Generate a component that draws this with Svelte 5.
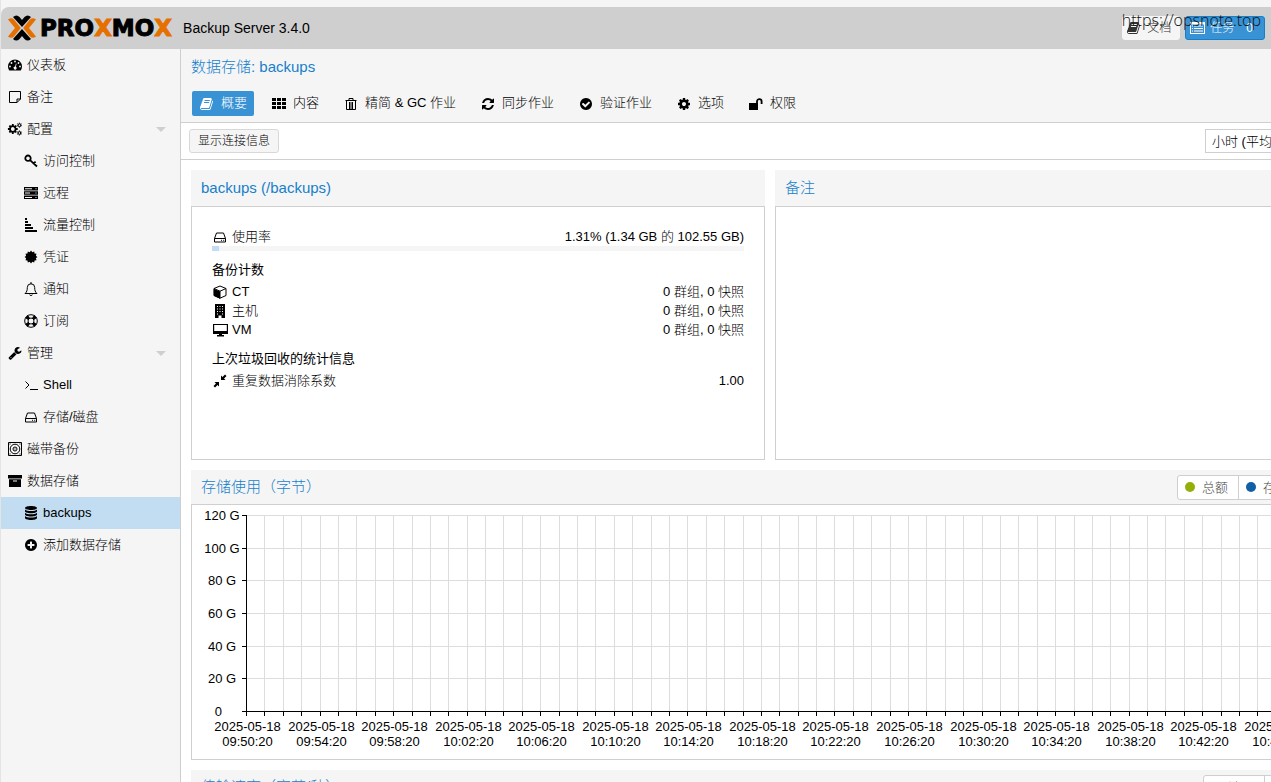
<script>
  // Shapes are drawn on a 14px box; `box: 1792` marks the ones on the font grid.
  const dot = (x, y, r) => `M${x - r} ${y}a${r} ${r} 0 1 0 ${r * 2} 0a${r} ${r} 0 1 0 ${-r * 2} 0z`
  const at = (cx, cy, r, a) => `${(cx + r * Math.cos(a)).toFixed(2)} ${(cy + r * Math.sin(a)).toFixed(2)}`

  function star(cx, cy, inner, outer, points) {
    const list = []
    for (let i = 0; i < points * 2; i++) {
      list.push(at(cx, cy, i % 2 ? inner : outer, (i * Math.PI) / points))
    }
    return `M${list.join('L')}z`
  }

  function teeth(cx, cy, inner, outer) {
    let d = ''
    for (let i = 0; i < 8; i++) {
      const a = (i * Math.PI) / 4
      d += `M${at(cx, cy, inner, a)}L${at(cx, cy, outer, a)}`
    }
    return d
  }

  const disc = 'm252 162q0 209-103 385.5t-279.5 279.5-385.5 103-385.5-103-279.5-279.5-103-385.5 103-385.5 279.5-279.5 385.5-103 385.5 103 279.5 279.5 103 385.5z'

  const icons = {
    dashboard: {
      fill:
        'M7 1.5a7 7 0 0 0-7 7c0 1.4.4 2.7 1.1 3.8.1.2.3.2.5.2h10.8c.2 0 .3 0 .5-.2A7 7 0 0 0 14 8.5a7 7 0 0 0-7-7z' +
        dot(2, 8.5, 0.9) + dot(3.5, 5, 0.9) + dot(7, 3.5, 0.9) + dot(10.5, 5, 0.9) + dot(12, 8.5, 0.9) +
        'M7.9 5.500l.7.2-.7 3a1.500 1.500 0 1 1-.8-.2z',
    },
    note: { line: 'M1.5 1.5h11v7.500l-3.500 3.500h-7.500zM12.500 9H9v3.500', },
    cogs: {
      line: dot(11.4, 3.2, 1.3) + teeth(11.4, 3.2, 1.5, 2.5) + dot(11.4, 11, 1.3) + teeth(11.4, 11, 1.5, 2.5),
      heavy: dot(4.8, 7, 2.8) + teeth(4.8, 7, 3, 4.9),
    },
    key: { heavy: dot(4, 4.2, 2.7) + 'M6 6.200L13 12.500M9.800 9.400l1.800-1.700' },
    server: {
      fill: 'M0 1h14v3.500H0zM0 5.300h14v3.500H0zM0 9.600h14v3.500H0zM1 2.300h7v1H1zM1 6.600h5v1H1zM1 10.900h7v1H1zM11.500 2.300h1v1h-1zM11.500 6.600h1v1h-1zM11.500 10.900h1v1h-1z',
    },
    amount: { fill: 'M1 0h2v2H1zM1 3h3v2H1zM1 6h6v2H1zM1 9h8v2H1zM1 12h12v2H1z' },
    certificate: { fill: star(7, 7, 5, 6.4, 12) },
    bell: { line: 'M1 11.500c1.900-1.600 2.300-3.200 2.300-6a3.700 3.700 0 0 1 7.400 0c0 2.800.4 4.400 2.300 6zM5.700 12.500c.3 1.500 2.300 1.500 2.600 0M7 0v2' },
    ring: { line: dot(7, 7, 6.3) + dot(7, 7, 3), heavy: 'M3.200 1.600l2 3M1.600 3.200l3 2M10.800 1.600l-2 3M12.400 3.200l-3 2M3.200 12.400l2-3M1.600 10.800l3-2M10.800 12.400l-2-3M12.400 10.800l-3-2' },
    wrench: {
      box: 1792,
      fill: 'M448 1472q0-26-19-45t-45-19-45 19-19 45 19 45 45 19 45-19 19-45zm644-420l-682 682q-37 37-90 37-52 0-91-37l-106-108q-38-36-38-90 0-53 38-91l681-681q39 98 114.500 173.500t173.500 114.500zm634-435q0 39-23 106-47 134-164.500 217.500t-258.500 83.500q-185 0-316.500-131.500t-131.500-316.500 131.500-316.500 316.500-131.500q58 0 121.500 16.500t107.500 46.500q16 11 16 28t-16 28l-293 169v224l193 107q5-3 79-48.500t135.500-81 70.500-35.500q15 0 23.500 10t8.500 25z',
    },
    terminal: { line: 'M1.500 3.500l3.500 3.500-3.500 3.500M6 11.500h8' },
    hdd: { line: 'M1.500 8.500l2-5.500h7l2 5.500v3.500h-11zM1.500 8.500h11M8 10.300h1M10.200 10.300h1' },
    tape: { line: 'M.5.5h13v13H.5z' + dot(7, 7, 4.8) + dot(7, 7, 2) + 'M6.500 7h1M1.500 2h1M11.500 2h1M1.500 12h1M11.500 12h1' },
    archive: { fill: 'M0 1h14v3.500H0zM1 5.300h12V13H1zM5 6.500h4v1H5z' },
    database: {
      fill: 'M7 0c3.300 0 6 .9 6 2s-2.700 2-6 2-6-.9-6-2 2.700-2 6-2zM1 3.500c1 1 3.500 1.500 6 1.500s5-.5 6-1.500v1.700c0 1.100-2.700 2-6 2s-6-.9-6-2zM1 6.700c1 1 3.500 1.500 6 1.500s5-.5 6-1.500v1.800c0 1.100-2.700 2-6 2s-6-.9-6-2zM1 10c1 1 3.500 1.500 6 1.500s5-.5 6-1.500v2c0 1.100-2.700 2-6 2s-6-.9-6-2z',
    },
    plus: {
      box: 1792,
      fill: 'M1344 960v-128q0-26-19-45t-45-19h-256v-256q0-26-19-45t-45-19h-128q-26 0-45 19t-19 45v256h-256q-26 0-45 19t-19 45v128q0 26 19 45t45 19h256v256q0 26 19 45t45 19h128q26 0 45-19t19-45v-256h256q26 0 45-19t19-45zm320-64' + disc.slice(8),
    },
    book: {
      box: 1792,
      fill: 'M1639 478q40 57 18 129l-275 906q-19 64-76.500 107.500t-122.500 43.500h-923q-77 0-148.500-53.500t-99.500-131.500q-24-67-2-127 0-4 3-27t4-37q1-8-3-21.500t-3-19.500q2-11 8-21t16.500-23.500 16.500-23.500q23-38 45-91.500t30-91.500q3-10 .5-30t-.5-28q3-11 17-28t17-23q21-36 42-92t25-90q1-9-2.500-32t.5-28q4-13 22-30.500t22-22.500q19-26 42.500-84.500t27.500-96.500q1-8-3-25.500t-2-26.500q2-8 9-18t18-23 17-21q8-12 16.500-30.500t15-35 16-36 19.500-32 26.500-23.500 36-11.500 47.500 5.500l-1 3q38-9 51-9h761q74 0 114 56t18 130l-274 906q-36 119-71.500 153.500t-128.500 34.500h-869q-27 0-38 15-11 16-1 43 24 70 144 70h923q29 0 56-15.500t35-41.500l300-987q7-22 5-57 38 15 59 43zm-1064 2q-4 13 2 22.500t20 9.500h608q13 0 25.500-9.500t16.500-22.500l21-64q4-13-2-22.500t-20-9.500h-608q-13 0-25.500 9.500t-16.500 22.500zm-83 256q-4 13 2 22.500t20 9.500h608q13 0 25.500-9.500t16.500-22.500l21-64q4-13-2-22.500t-20-9.500h-608q-13 0-25.500 9.500t-16.500 22.500z',
    },
    grid: { fill: 'M0 1h4v3H0zM5 1h4v3H5zM10 1h4v3h-4zM0 5h4v3H0zM5 5h4v3H5zM10 5h4v3h-4zM0 9h4v3H0zM5 9h4v3H5zM10 9h4v3h-4z' },
    trash: { line: 'M1.500 3.500h11M5 3V1.500h4V3M2.500 4v8.500h9V4M5.500 5v7M7 5v7M8.500 5v7' },
    refresh: {
      box: 1792,
      fill: 'M1639 1056q0 5-1 7-64 268-268 434.500t-478 166.500q-146 0-282.500-55t-243.500-157l-129 129q-19 19-45 19t-45-19-19-45v-448q0-26 19-45t45-19h448q26 0 45 19t19 45-19 45l-137 137q71 66 161 102t187 36q134 0 250-65t186-179q11-17 53-117 8-23 30-23h192q13 0 22.500 9.500t9.500 22.500zm25-800v448q0 26-19 45t-45 19h-448q-26 0-45-19t-19-45 19-45l138-138q-148-137-349-137-134 0-250 65t-186 179q-11 17-53 117-8 23-30 23h-199q-13 0-22.500-9.500t-9.500-22.500v-7q65-268 270-434.500t480-166.500q146 0 284 55.500t245 156.500l130-129q19-19 45-19t45 19 19 45z',
    },
    check: {
      box: 1792,
      fill: 'M1412 734q0-28-18-46l-91-90q-19-19-45-19t-45 19l-408 407-226-226q-19-19-45-19t-45 19l-91 90q-18 18-18 46 0 27 18 45l362 362q19 19 45 19 27 0 46-19l543-543q18-18 18-45z' + disc,
    },
    cog: {
      box: 1792,
      fill: 'M1152 896q0-106-75-181t-181-75-181 75-75 181 75 181 181 75 181-75 75-181zm512-109v222q0 12-8 23t-20 13l-185 28q-19 54-39 91 35 50 107 138 10 12 10 25t-9 23q-27 37-99 108t-94 71q-12 0-26-9l-138-108q-44 23-91 38-16 136-29 186-7 28-36 28h-222q-14 0-24.500-8.500t-11.500-21.500l-28-184q-49-16-90-37l-141 107q-10 9-25 9-14 0-25-11-126-114-165-168-7-10-7-23 0-12 8-23 15-21 51-66.500t54-70.500q-27-50-41-99l-183-27q-13-2-21-12.500t-8-23.500v-222q0-12 8-23t19-13l186-28q14-46 39-92-40-57-107-138-10-12-10-24 0-10 9-23 26-36 98.500-107.500t94.500-71.500q13 0 26 10l138 107q44-23 91-38 16-136 29-186 7-28 36-28h222q14 0 24.500 8.500t11.500 21.500l28 184q49 16 90 37l142-107q9-9 24-9 13 0 25 10 129 119 165 170 7 8 7 22 0 12-8 23-15 21-51 66.500t-54 70.500q26 50 41 98l183 28q13 2 21 12.500t8 23.500z',
    },
    unlock: { fill: 'M0 6h9v7H0z', heavy: 'M8 6V4.500a2.300 2.300 0 0 1 4.600 0V7' },
    cube: { fill: 'M.8 3.800L7 6.500V13.700L.8 10.800z', line: 'M7 1l6 2.500v7L7 13.200 1 10.500v-7zM1 3.500l6 2.700 6-2.700M7 6.200v7' },
    building: { fill: 'M2 0h10v14H8.500v-2.500h-3V14H2zM4 2h1v1H4zM6.500 2h1v1h-1zM9 2h1v1H9zM4 4.500h1v1H4zM6.500 4.500h1v1h-1zM9 4.500h1v1H9zM4 7h1v1H4zM6.500 7h1v1h-1zM9 7h1v1H9zM4 9.500h1v1H4zM9 9.500h1v1H9z' },
    desktop: { fill: 'M0 1h15v10H9v1h2v1.500H4V12h2v-1H0zM1.200 2v6h12.600V2z' },
    compress: { fill: 'M8 1.500l1.500 1.500L12 .5 13.500 2 11 4.500 12.500 6H8zM1.500 8H6v4.500L4.500 11 2 13.500.5 12 3 9.500z' },
    list: { fill: 'M0 1h15v12H0zM1 3.500v8.500h13V3.500zM2 4.500h1v1H2zM4 4.500h9v1H4zM2 7h1v1H2zM4 7h9v1H4zM2 9.500h1v1H2zM4 9.500h9v1H4z' },
  }

  const menu = [
    { icon: 'dashboard', label: '仪表板' },
    { icon: 'note', label: '备注' },
    { icon: 'cogs', label: '配置', open: true },
    { icon: 'key', label: '访问控制', sub: true },
    { icon: 'server', label: '远程', sub: true },
    { icon: 'amount', label: '流量控制', sub: true },
    { icon: 'certificate', label: '凭证', sub: true },
    { icon: 'bell', label: '通知', sub: true },
    { icon: 'ring', label: '订阅', sub: true },
    { icon: 'wrench', label: '管理', open: true },
    { icon: 'terminal', label: 'Shell', sub: true },
    { icon: 'hdd', label: '存储/磁盘', sub: true },
    { icon: 'tape', label: '磁带备份' },
    { icon: 'archive', label: '数据存储' },
    { icon: 'database', label: 'backups', sub: true },
    { icon: 'plus', label: '添加数据存储', sub: true },
  ]

  const tabs = [
    { icon: 'book', label: '概要' },
    { icon: 'grid', label: '内容' },
    { icon: 'trash', label: '精简 & GC 作业' },
    { icon: 'refresh', label: '同步作业' },
    { icon: 'check', label: '验证作业' },
    { icon: 'cog', label: '选项' },
    { icon: 'unlock', label: '权限' },
  ]

  const counts = [
    { icon: 'cube', label: 'CT' },
    { icon: 'building', label: '主机' },
    { icon: 'desktop', label: 'VM' },
  ]

  const charts = [
    { title: '存储使用（字节）', series: ['总额', '存储使用'], ticks: ['120 G', '100 G', '80 G', '60 G', '40 G', '20 G', '0\u00a0\u00a0'] },
    { title: '传输速率（字节/秒）', series: ['读取', '写入'], ticks: ['1', '0.8', '0.6', '0.4', '0.2', '0'] },
  ]

  const usage = 1.31
  const minutes = 59
  const plot = { left: 54, right: 17, top: 10, bottom: 206 }

  let current = $state('backups')
  let tab = $state('概要')
  let chartWidth = $state(1156)
  let step = $derived((chartWidth - plot.left - plot.right) / minutes)

  const tickX = (i) => Math.round(plot.left + i * step) + 0.5
  const tickY = (i, count) => Math.round(plot.top + (i * (plot.bottom - plot.top)) / (count - 1)) + 0.5

  function clock(i) {
    const total = 9 * 60 + 50 + i
    const pad = (n) => String(n).padStart(2, '0')
    return `${pad(Math.floor(total / 60))}:${pad(total % 60)}:20`
  }
</script>

{#snippet icon(name)}
  {@const shape = icons[name]}
  <svg class="icon" viewBox="0 0 {shape.box ?? 14} {shape.box ?? 14}" aria-hidden="true">
    {#if shape.fill}<path d={shape.fill} fill="currentColor" fill-rule="evenodd" />{/if}
    {#if shape.line}<path d={shape.line} fill="none" stroke="currentColor" />{/if}
    {#if shape.heavy}<path d={shape.heavy} fill="none" stroke="currentColor" stroke-width="1.8" />{/if}
  </svg>
{/snippet}

<div class="app">
  <header class="topbar">
    <svg class="mark" viewBox="0 0 28 26" aria-hidden="true">
      <path d="M0 4.500Q3.500 2 6 4.500L12.800 13 6 21.500Q3.500 24 0 21.500L7 13zM28 4.500Q24.500 2 22 4.500L15.200 13 22 21.500Q24.500 24 28 21.500L21 13z" fill="#e57000" />
      <path d="M5 2Q8.500-1 11.500 2L14 5 16.500 2Q19.500-1 23 2L14 12zM5 24Q8.500 27 11.500 24L14 21 16.500 24Q19.500 27 23 24L14 14z" />
    </svg>
    <span class="brand">PRO<b>X</b>MO<b>X</b></span>
    <span class="version">Backup Server 3.4.0</span>
    <a class="top-btn" href="#docs">{@render icon('book')}<span>文档</span></a>
    <button class="top-btn tasks" type="button">{@render icon('list')}<span>任务</span><strong>0</strong></button>
    <span class="stamp">https://opsnote.top</span>
  </header>

  <div class="body">
    <nav class="sidebar">
      {#each menu as item}
        <a
          class="item"
          class:sub={item.sub}
          class:selected={current === item.label}
          href="#{item.icon}"
          onclick={() => (current = item.label)}
        >
          {@render icon(item.icon)}
          <span>{item.label}</span>
          {#if item.open}<i class="caret"></i>{/if}
        </a>
      {/each}
    </nav>

    <main class="main">
      <div class="heading">
        <h1>数据存储: backups</h1>
        <div class="tabs" role="tablist">
          {#each tabs as t}
            <button
              class="tab"
              class:active={tab === t.label}
              type="button"
              role="tab"
              aria-selected={tab === t.label}
              onclick={() => (tab = t.label)}
            >
              {@render icon(t.icon)}
              <span>{t.label}</span>
            </button>
          {/each}
        </div>
      </div>

      <div class="toolbar">
        <button class="plain" type="button">显示连接信息</button>
        <select class="range" aria-label="时间范围">
          <option>小时 (平均值)</option>
          <option>小时 (最大值)</option>
        </select>
      </div>

      <div class="content">
        <div class="pair">
          <section class="panel">
            <h2>backups (/backups)</h2>
            <div class="box info">
              <div class="row">
                {@render icon('hdd')}
                <span>使用率</span>
                <span class="value">1.31% (1.34 GB 的 102.55 GB)</span>
              </div>
              <div class="meter"><div class="fill" style:width="{usage}%"></div></div>
              <h3>备份计数</h3>
              {#each counts as c}
                <div class="row">
                  {@render icon(c.icon)}
                  <span>{c.label}</span>
                  <span class="value">0 群组, 0 快照</span>
                </div>
              {/each}
              <h3>上次垃圾回收的统计信息</h3>
              <div class="row">
                {@render icon('compress')}
                <span>重复数据消除系数</span>
                <span class="value">1.00</span>
              </div>
            </div>
          </section>
          <section class="panel">
            <h2>备注</h2>
            <div class="box"></div>
          </section>
        </div>

        {#each charts as chart}
          <section class="panel chart">
            <div class="chart-head">
              <h2>{chart.title}</h2>
              <div class="legend">
                {#each chart.series as name, i}
                  <button type="button"><i class="dot" class:second={i === 1}></i>{name}</button>
                {/each}
              </div>
            </div>
            <div class="box" bind:clientWidth={chartWidth}>
              <svg class="plot" role="img" aria-label={chart.title}>
                <g class="grid">
                  {#each chart.ticks as _, i}
                    <line x1={plot.left} x2={chartWidth - plot.right} y1={tickY(i, chart.ticks.length)} y2={tickY(i, chart.ticks.length)} />
                  {/each}
                  {#each { length: minutes + 1 } as _, i}
                    <line x1={tickX(i)} x2={tickX(i)} y1={plot.top} y2={plot.bottom} />
                  {/each}
                </g>
                <g class="axis">
                  {#each chart.ticks as label, i}
                    <line x1={plot.left - 4} x2={plot.left} y1={tickY(i, chart.ticks.length)} y2={tickY(i, chart.ticks.length)} />
                    <text x="30" y={tickY(i, chart.ticks.length) + 4}>{label}</text>
                  {/each}
                  {#each { length: minutes + 1 } as _, i}
                    <line x1={tickX(i)} x2={tickX(i)} y1={plot.bottom} y2={plot.bottom + 5} />
                    {#if i % 4 === 0}
                      <text x={tickX(i) + 1} y="226">2025-05-18</text>
                      <text x={tickX(i) + 1} y="241">{clock(i)}</text>
                    {/if}
                  {/each}
                  <line x1={plot.left + 0.5} x2={plot.left + 0.5} y1={plot.top} y2={plot.bottom} />
                  <line x1={plot.left} x2={chartWidth - plot.right} y1={plot.bottom + 0.5} y2={plot.bottom + 0.5} />
                </g>
              </svg>
            </div>
          </section>
        {/each}
      </div>
    </main>
  </div>
</div>

<style>
  :global(body) {
    background: #f5f5f5;
  }
  .app {
    display: flex;
    flex-direction: column;
    height: 100vh;
    padding-top: 7px;
    box-sizing: border-box;
    border-left: 1px solid #e4e4e4;
    overflow: hidden;
    font-family: 'Liberation Sans', 'Noto Sans CJK SC', sans-serif;
    font-size: 13px;
    font-weight: 300;
    line-height: 19px;
    color: #000;
  }
  button,
  select {
    font: inherit;
    color: inherit;
    margin: 0;
  }
  h1,
  h2,
  h3 {
    margin: 0;
    font-weight: 300;
  }
  .icon {
    width: 14px;
    height: 14px;
    flex: none;
    overflow: visible;
  }

  .topbar {
    position: relative;
    display: flex;
    align-items: center;
    flex: none;
    height: 42px;
    padding: 0 6px 0 7px;
    background: #cfcfcf;
    border-top-left-radius: 8px;
  }
  .mark {
    width: 28px;
    height: 26px;
  }
  .brand {
    margin-left: 4px;
    font-family: 'DejaVu Sans', sans-serif;
    font-size: 23px;
    font-weight: 700;
    -webkit-text-stroke: 1px currentColor;
  }
  .brand b {
    color: #e57000;
  }
  .version {
    margin: 0 auto 0 11px;
    font-size: 14px;
  }
  .top-btn {
    display: flex;
    align-items: center;
    gap: 6px;
    height: 24px;
    box-sizing: border-box;
    padding: 0 8px 0 4px;
    border: 1px solid #f5f5f5;
    border-radius: 3px;
    background: #f5f5f5;
    font-size: 12px;
    color: #333;
    text-decoration: none;
  }
  .tasks {
    margin-left: 5px;
    padding-right: 11px;
    border-color: #157fcc;
    background: #3892d4;
    color: #fff;
  }
  .tasks strong {
    margin-left: 6px;
  }
  .stamp {
    position: absolute;
    top: 2px;
    right: 10px;
    font-family: 'Open Sans', sans-serif;
    font-size: 16px;
    line-height: 22px;
    color: #111;
    pointer-events: none;
  }

  .body {
    display: flex;
    flex: 1;
    min-height: 0;
  }
  .sidebar {
    flex: none;
    width: 179px;
    border-right: 1px solid #cfcfcf;
  }
  .item {
    display: flex;
    align-items: center;
    gap: 5px;
    height: 32px;
    padding: 0 14px 0 7px;
    box-sizing: border-box;
    color: #000;
    text-decoration: none;
  }
  .item span,
  .tab span {
    padding-bottom: 2px;
  }
  .sub {
    padding-left: 23px;
  }
  .selected {
    background: #c2ddf2;
  }
  .caret {
    margin-left: auto;
    border: 5px solid transparent;
    border-top-color: #cfcfcf;
    border-bottom: 0;
  }

  .main {
    flex: 1;
    min-width: 0;
    overflow: hidden;
    background: #fff;
  }
  .heading {
    padding: 6px 10px;
    border-bottom: 1px solid #cfcfcf;
    background: #f5f5f5;
  }
  h1 {
    font-size: 15px;
    line-height: 24px;
    color: #157fcc;
  }
  .tabs {
    display: flex;
    gap: 10px;
    margin-top: 12px;
    padding-left: 1px;
  }
  .tab {
    display: flex;
    align-items: center;
    gap: 7px;
    height: 25px;
    padding: 0 7px 0 8px;
    border: 0;
    border-radius: 2px;
    background: none;
    white-space: nowrap;
  }
  .tab.active {
    background: #3892d4;
    color: #fff;
  }
  .toolbar {
    display: flex;
    justify-content: space-between;
    align-items: center;
    min-width: 1178px;
    height: 37px;
    padding: 0 8px;
    box-sizing: border-box;
    border-bottom: 1px solid #cfcfcf;
  }
  .plain {
    height: 24px;
    padding: 0 8px;
    border: 1px solid #d8d8d8;
    border-radius: 3px;
    background: #f5f5f5;
    font-size: 12px;
  }
  .range {
    width: 146px;
    height: 24px;
    padding: 0 6px;
    border: 1px solid #cfcfcf;
    background: #fff;
    appearance: none;
  }

  .content {
    display: flex;
    flex-direction: column;
    gap: 10px;
    min-width: 1178px;
    padding: 10px;
    box-sizing: border-box;
  }
  .pair {
    display: grid;
    grid-template-columns: 1fr 1fr;
    gap: 10px;
  }
  .panel {
    display: flex;
    flex-direction: column;
  }
  h2 {
    padding: 0 10px;
    background: #f5f5f5;
    font-size: 15px;
    line-height: 36px;
    color: #157fcc;
  }
  .box {
    flex: 1;
    border: 1px solid #cfcfcf;
  }
  .info {
    min-height: 232px;
    padding: 20px 20px 0;
  }
  .row {
    display: flex;
    align-items: center;
    gap: 5px;
    padding-left: 1px;
  }
  .value {
    margin-left: auto;
  }
  .meter {
    height: 5px;
    margin-bottom: 9px;
    background: #f5f5f5;
  }
  .fill {
    height: 100%;
    background: #c2ddf2;
  }
  h3 {
    margin-bottom: 3px;
    font-size: 13px;
    font-weight: 400;
  }
  .row + h3 {
    margin-top: 10px;
  }

  .chart-head {
    display: flex;
    justify-content: space-between;
    align-items: center;
    height: 34px;
    padding-right: 23px;
    background: #f5f5f5;
  }
  .chart-head h2 {
    line-height: 34px;
  }
  .legend {
    display: flex;
    border: 1px solid #cfcfcf;
    border-radius: 3px;
    background: #fff;
  }
  .legend button {
    display: flex;
    align-items: center;
    gap: 7px;
    height: 23px;
    padding: 0 10px 0 7px;
    border: 0;
    background: none;
    color: #444;
  }
  .legend button + button {
    border-left: 1px solid #cfcfcf;
  }
  .dot {
    width: 10px;
    height: 10px;
    border-radius: 50%;
    background: #94ae0a;
  }
  .dot.second {
    background: #115fa6;
  }
  .plot {
    display: block;
    width: 100%;
    height: 254px;
  }
  .plot line {
    shape-rendering: crispEdges;
  }
  .grid line {
    stroke: #ddd;
  }
  .axis line {
    stroke: #000;
  }
  .axis text {
    text-anchor: middle;
  }
</style>
